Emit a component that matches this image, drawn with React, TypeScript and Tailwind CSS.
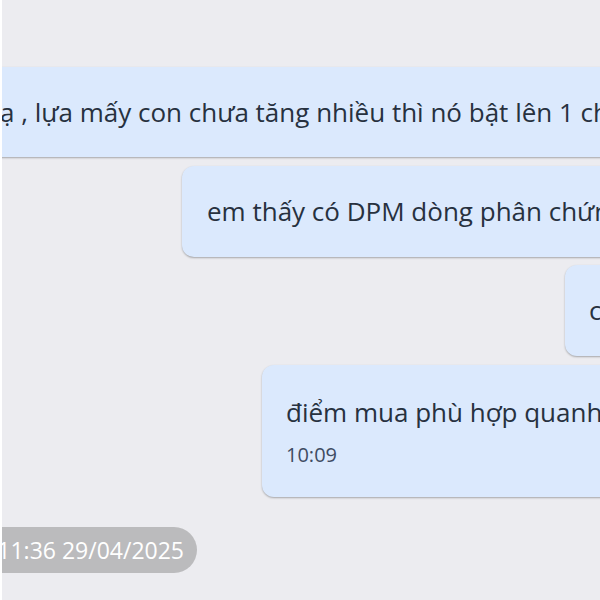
export default function App() {
  const font = { fontFamily: '"Open Sans", "Noto Sans", sans-serif' };
  return (
    <div className="w-[600px] h-[600px] overflow-hidden bg-[#ececf0] border-l-2 border-white" style={font}>
      <div className="flex flex-col pt-[67px] text-[#27313f]">
        <div className="-ml-[40px] w-[700px] h-[90px] flex items-center pl-[38px] rounded-xl bg-[#dbe9fd] shadow-[0_1px_2px_rgba(0,0,0,0.3)] text-[26px] whitespace-nowrap">
          ạ , lựa mấy con chưa tăng nhiều thì nó bật lên 1 chút
        </div>
        <div className="mt-[9px] ml-[180px] w-[500px] h-[91px] flex items-center pl-[25px] rounded-xl bg-[#dbe9fd] shadow-[0_1px_2px_rgba(0,0,0,0.3)] text-[26px] whitespace-nowrap">
          em thấy có DPM dòng phân chứng khoán
        </div>
        <div className="mt-[8px] ml-[563px] w-[200px] h-[91px] flex items-center pl-[24px] rounded-xl bg-[#dbe9fd] shadow-[0_1px_2px_rgba(0,0,0,0.3)] text-[26px] whitespace-nowrap">
          cũng có
        </div>
        <div className="mt-[9px] ml-[260px] w-[500px] h-[132px] flex flex-col pl-[24px] pt-[29px] rounded-xl bg-[#dbe9fd] shadow-[0_1px_2px_rgba(0,0,0,0.3)] whitespace-nowrap">
          <div className="text-[26px] leading-[36px]">điểm mua phù hợp quanh vùng này</div>
          <div className="mt-[12px] text-[20px] leading-[26px] text-[#3f4c63]">10:09</div>
        </div>
        <div className="mt-[30px] -ml-[40px] w-[235px] h-[46px] flex items-center justify-end pr-[13px] rounded-full bg-[#bbbbbd] text-white text-[23px] whitespace-nowrap">
          11:36 29/04/2025
        </div>
      </div>
    </div>
  );
}
